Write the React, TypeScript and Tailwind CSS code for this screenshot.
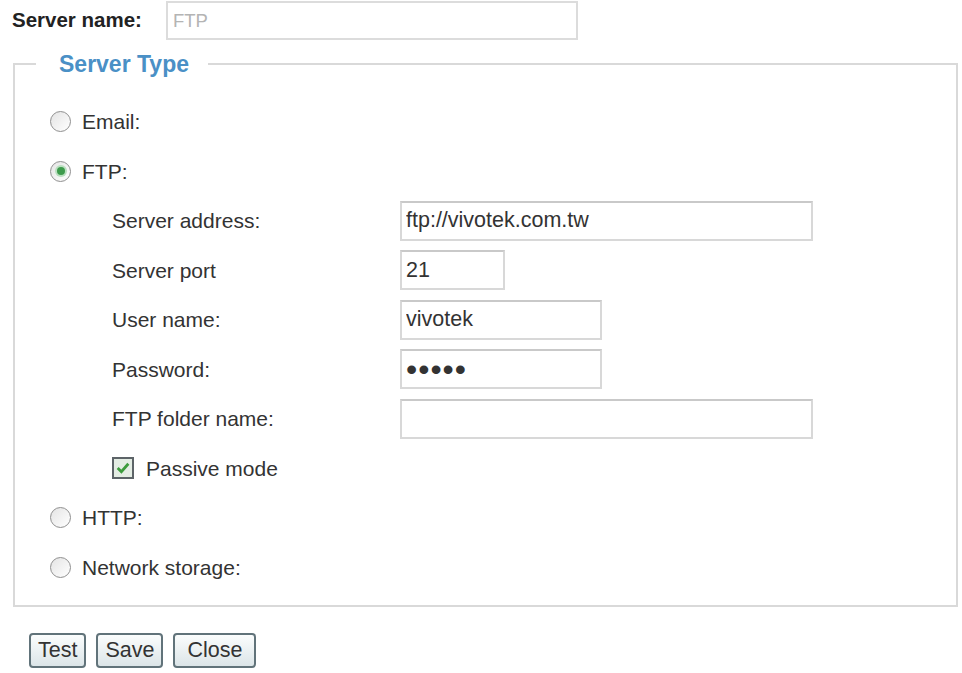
import type { ReactNode } from "react";

function Radio({ checked }: { checked?: boolean }) {
  return (
    <span className="flex h-[21px] w-[21px] shrink-0 items-center justify-center rounded-full border-[1.5px] border-[#8f8f8f] bg-linear-to-br from-[#e4e4e4] to-white">
      {checked && (
        <span className="h-[8px] w-[8px] rounded-full bg-[#3d9b4c] shadow-[0_0_0_2px_#b9dfbf]" />
      )}
    </span>
  );
}

function RadioRow({ label, checked }: { label: string; checked?: boolean }) {
  return (
    <div className="flex h-[49.5px] items-center gap-[11px]">
      <Radio checked={checked} />
      <span>{label}</span>
    </div>
  );
}

function FieldRow({ label, children }: { label: string; children: ReactNode }) {
  return (
    <div className="flex h-[49.5px] items-center pl-[62px]">
      <span className="w-[288px] shrink-0">{label}</span>
      {children}
    </div>
  );
}

const inputCls =
  "h-[40px] border-2 border-[#d8d8d8] border-t-[#c9c9c9] bg-white px-[4px] text-[21.5px] text-[#333] outline-none";

function Btn({ label, wide }: { label: string; wide?: boolean }) {
  return (
    <button
      className={
        "h-[35px] rounded-[4px] border-2 border-[#61737a] bg-linear-to-b from-[#fbfdfd] to-[#dce5e8] text-[21.5px] leading-none text-[#333] " +
        (wide ? "px-[12px]" : "px-[7px]")
      }
    >
      {label}
    </button>
  );
}

export default function App() {
  return (
    <div className="min-h-screen w-[962px] bg-white font-['Liberation_Sans',Arial,sans-serif] text-[21px] text-[#333]">
      <div className="flex items-center pl-[12px] pt-[1px]">
        <span className="w-[154px] shrink-0 text-[20.5px] font-bold text-[#222]">Server name:</span>
        <input
          className="h-[39px] w-[412px] border-2 border-[#dcdcdc] px-[5px] text-[18.5px] text-[#333] outline-none placeholder:text-[#b4b4b4]"
          placeholder="FTP"
        />
      </div>

      <fieldset className="ml-[13px] mt-[11px] w-[945px] border-2 border-[#d9d9d9] p-0">
        <legend className="ml-[21px] pl-[23px] pr-[19px] text-[23px] font-bold leading-[26px] text-[#4a90c6]">
          Server Type
        </legend>
        <div className="pb-[13px] pl-[35px] pt-[20px]">
          <RadioRow label="Email:" />
          <RadioRow label="FTP:" checked />
          <FieldRow label="Server address:">
            <input className={inputCls + " w-[413px]"} defaultValue="ftp://vivotek.com.tw" />
          </FieldRow>
          <FieldRow label="Server port">
            <input className={inputCls + " w-[105px]"} defaultValue="21" />
          </FieldRow>
          <FieldRow label="User name:">
            <input className={inputCls + " w-[202px]"} defaultValue="vivotek" />
          </FieldRow>
          <FieldRow label="Password:">
            <input
              type="password"
              className={inputCls + " w-[202px] text-[32px] tracking-[1px]"}
              defaultValue="12345"
            />
          </FieldRow>
          <FieldRow label="FTP folder name:">
            <input className={inputCls + " w-[413px]"} defaultValue="" />
          </FieldRow>
          <div className="flex h-[49.5px] items-center gap-[12px] pl-[62px]">
            <span className="flex h-[22px] w-[22px] shrink-0 items-center justify-center border-2 border-[#5d6468] bg-[#e4ede4]">
              <svg width="16" height="16" viewBox="0 0 15 15">
                <path d="M2.5 7.5 L6 11 L12.5 3.5" fill="none" stroke="#3d9c3d" strokeWidth="2.6" />
              </svg>
            </span>
            <span>Passive mode</span>
          </div>
          <RadioRow label="HTTP:" />
          <RadioRow label="Network storage:" />
        </div>
      </fieldset>

      <div className="ml-[29px] mt-[26px] flex gap-[10px]">
        <Btn label="Test" />
        <Btn label="Save" />
        <Btn label="Close" wide />
      </div>
    </div>
  );
}
